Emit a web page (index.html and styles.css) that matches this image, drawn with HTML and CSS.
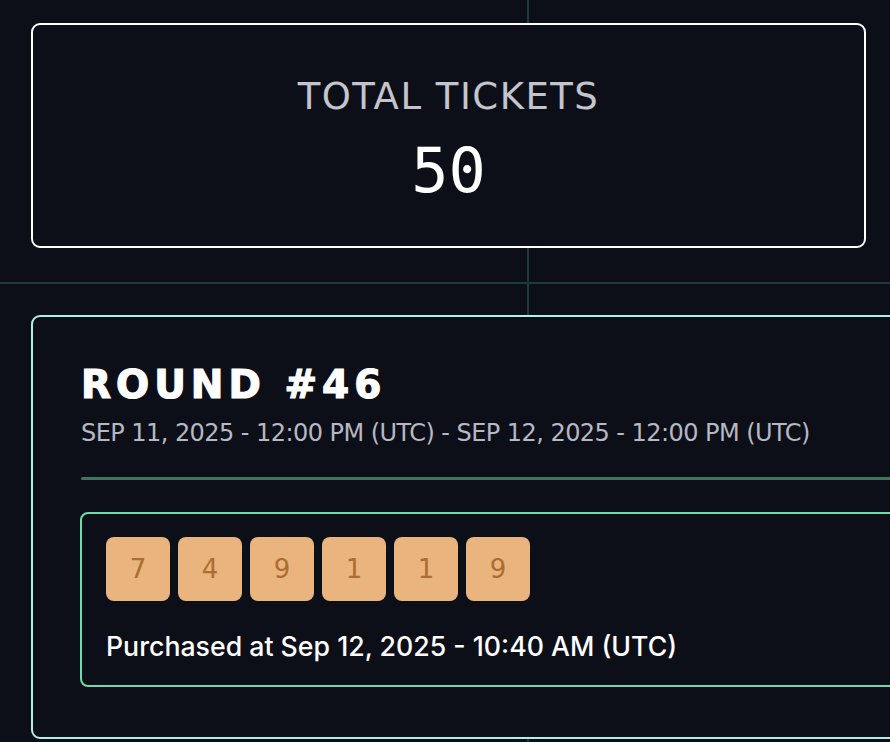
FILE: index.html
```html
<!DOCTYPE html>
<html>
<head>
<meta charset="utf-8">
<link rel="stylesheet" href="styles.css">
</head>
<body>
<div class="page">
  <section class="stat-card">
    <div class="stat-label">TOTAL TICKETS</div>
    <div class="stat-value">50</div>
  </section>
  <section class="round-card">
    <h2 class="round-title">ROUND #46</h2>
    <div class="round-dates">SEP 11, 2025 - 12:00 PM (UTC) - SEP 12, 2025 - 12:00 PM (UTC)</div>
    <div class="divider"></div>
    <div class="ticket">
      <div class="numbers">
        <span class="num">7</span>
        <span class="num">4</span>
        <span class="num">9</span>
        <span class="num">1</span>
        <span class="num">1</span>
        <span class="num">9</span>
      </div>
      <div class="purchased">Purchased at Sep 12, 2025 - 10:40 AM (UTC)</div>
    </div>
  </section>
</div>
</body>
</html>
```

FILE: styles.css
```css
html, body {
  margin: 0;
  padding: 0;
}
body {
  width: 890px;
  height: 742px;
  overflow: hidden;
  background-color: #0c0f18;
  background-image:
    linear-gradient(to right, transparent 527px, #1c3b3a 527px, #1c3b3a 529px, transparent 529px),
    linear-gradient(to bottom, transparent 282px, #1c3b3a 282px, #1c3b3a 284px, transparent 284px);
  font-family: "DejaVu Sans", sans-serif;
}
.page {
  padding: 23px 0 0 31px;
  display: flex;
  flex-direction: column;
  gap: 67px;
}
.stat-card {
  box-sizing: border-box;
  width: 835px;
  height: 225px;
  border: 2px solid #ffffff;
  border-radius: 9px;
  background: #0c0f18;
  display: flex;
  flex-direction: column;
  align-items: center;
  justify-content: center;
  gap: 26px;
  padding-top: 4px;
}
.stat-label {
  font-family: "DejaVu Sans", sans-serif;
  font-size: 37px;
  line-height: 40px;
  color: #c4c5cc;
  letter-spacing: 1.5px;
}
.stat-value {
  font-family: "DejaVu Sans Mono", monospace;
  font-size: 62px;
  line-height: 56px;
  color: #ffffff;
}
.round-card {
  box-sizing: border-box;
  width: 1000px;
  height: 424px;
  border: 2px solid #b4efe4;
  border-radius: 9px;
  background: #0c0f18;
  padding: 46px 0 0 48px;
}
.round-title {
  margin: 0;
  font-family: "DejaVu Sans", sans-serif;
  font-weight: 900;
  font-size: 39px;
  line-height: 44px;
  letter-spacing: 5px;
  color: #ffffff;
  -webkit-text-stroke: 1.2px #ffffff;
}
.round-dates {
  margin-top: 12px;
  font-family: "DejaVu Sans", sans-serif;
  font-size: 24px;
  line-height: 28px;
  letter-spacing: -0.55px;
  color: #b6b8c3;
  white-space: nowrap;
}
.divider {
  margin-top: 30px;
  height: 3px;
  border-radius: 2px;
  background: #3b785b;
}
.ticket {
  box-sizing: border-box;
  margin-top: 32px;
  margin-left: -1px;
  height: 175px;
  border: 2px solid #70dba8;
  border-radius: 8px;
  padding: 23px 0 0 24px;
}
.numbers {
  display: flex;
  gap: 8px;
}
.num {
  width: 64px;
  height: 64px;
  border-radius: 8px;
  background: #e9b47d;
  color: #ad6c31;
  font-family: "DejaVu Sans", sans-serif;
  font-size: 26px;
  display: flex;
  align-items: center;
  justify-content: center;
}
.purchased {
  margin-top: 29px;
  font-family: Inter, sans-serif;
  font-weight: 500;
  font-size: 26.7px;
  line-height: 32px;
  color: #ffffff;
}
```
